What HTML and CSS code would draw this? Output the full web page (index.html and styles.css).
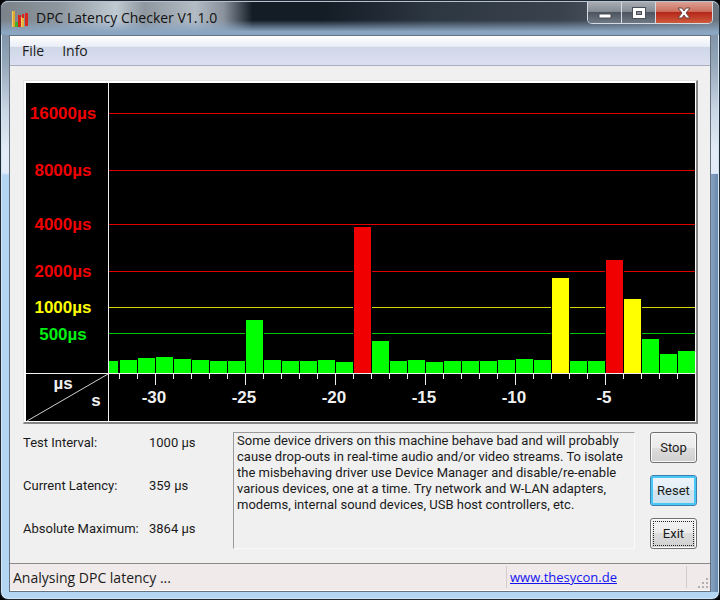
FILE: index.html
```
<!DOCTYPE html>
<html lang="en">
<head>
    <meta charset="utf-8">
    <title>DPC Latency Checker V1.1.0</title>
    <link rel="stylesheet" href="styles.css">
</head>
<body>
<div class="window">
    <div class="titlebar">
        <svg class="app-icon" width="18" height="18" viewBox="0 0 18 18">
            <path d="M1 1h3v16H1z" fill="#e0a832"/>
            <path d="M4 12h3v5H4z" fill="#3fae2a"/>
            <path d="M7 5h3v12H7z" fill="#d8261c"/>
            <path d="M10 7h3v10h-3z" fill="#e3b53a"/>
            <path d="M11 4h2v4h-2zM14 3h3v13h-3z" fill="#d8261c"/>
            <path d="M1 1h1v16H1zM10 7h1v10h-1z" fill="#f0cf60"/>
        </svg>
        <h1 class="title">DPC Latency Checker V1.1.0</h1>
        <div class="caption">
            <button class="caption-btn" aria-label="Minimize">
                <svg width="14" height="14" viewBox="0 0 14 14"><path d="M1 8h12v4H1z" fill="#fff" stroke="#4b4f58"/></svg>
            </button>
            <button class="caption-btn" aria-label="Maximize">
                <svg width="14" height="14" viewBox="0 0 14 14">
                    <path d="M0 1h14v12H0z" fill="#4b4f58"/>
                    <path d="M1 2h12v10H1zM4 5v4h6V5z" fill="#fff" fill-rule="evenodd"/>
                    <path d="M5 6h4v2H5z" fill="#8b929b"/>
                </svg>
            </button>
            <button class="caption-btn close" aria-label="Close">
                <svg width="14" height="14" viewBox="0 0 14 14"><path d="M1 2h4l2 3 2-3h4L9 7l4 5H9L7 9l-2 3H1l4-5z" fill="#fff" stroke="#6b4440"/></svg>
            </button>
        </div>
    </div>

    <div class="client">
        <div class="menubar">
            <button class="menu">File</button>
            <button class="menu">Info</button>
        </div>

        <div class="content">
            <div class="chart">
                <svg class="plot" viewBox="0 0 669 338">
                    <!-- thresholds -->
                    <g class="red">
                        <path d="M83 30h586v1H83zM83 87h586v1H83zM83 141h586v1H83zM83 188h586v1H83z"/>
                        <text x="37" y="36">16000µs</text>
                        <text x="37" y="93">8000µs</text>
                        <text x="37" y="147">4000µs</text>
                        <text x="37" y="194">2000µs</text>
                    </g>
                    <g class="yellow">
                        <path d="M83 224h586v1H83z"/>
                        <text x="37" y="230">1000µs</text>
                    </g>
                    <g class="green">
                        <path d="M83 250h586v1H83z"/>
                        <text x="37" y="257">500µs</text>
                    </g>

                    <!-- black gap behind each tall bar -->
                    <path d="M219 237h19v53h-19zM327 144h19v146h-19zM525 195h19v95h-19zM579 177h19v113h-19zM597 216h19v74h-19z"/>

                    <!-- one bar per second -->
                    <g class="bars green">
                        <path d="M83 278h9v12h-9zM94 277h17v13H94zM112 275h17v15h-17zM130 274h17v16h-17zM148 276h17v14h-17zM166 277h17v13h-17z"/>
                        <path d="M184 278h17v12h-17zM202 278h17v12h-17zM220 237h17v53h-17zM238 277h17v13h-17zM256 278h17v12h-17zM274 278h17v12h-17z"/>
                        <path d="M292 277h17v13h-17zM310 279h17v11h-17zM346 258h17v32h-17zM364 278h17v12h-17zM382 277h17v13h-17zM400 279h17v11h-17z"/>
                        <path d="M418 278h17v12h-17zM436 278h17v12h-17zM454 278h17v12h-17zM472 277h17v13h-17zM490 276h17v14h-17zM508 277h17v13h-17z"/>
                        <path d="M544 278h17v12h-17zM562 278h17v12h-17zM616 256h17v34h-17zM634 271h17v19h-17zM652 268h17v22h-17z"/>
                    </g>
                    <path class="bars yellow" d="M526 195h17v95h-17zM598 216h17v74h-17z"/>
                    <path class="bars red" d="M328 144h17v146h-17zM580 177h17v113h-17z"/>

                    <!-- axes and ticks -->
                    <g class="white">
                        <path d="M82 0h1v338h-1zM0 290h669v1H0z"/>
                        <path class="slash" d="M1 338L82 291"/>
                        <path class="minor" d="M93 293H669"/>
                        <path class="major" d="M129 296H669"/>
                        <text x="37" y="306">µs</text>
                        <text x="70" y="323">s</text>
                        <text x="128" y="320">-30</text>
                        <text x="218" y="320">-25</text>
                        <text x="308" y="320">-20</text>
                        <text x="398" y="320">-15</text>
                        <text x="488" y="320">-10</text>
                        <text x="578" y="320">-5</text>
                    </g>
                </svg>
            </div>

            <div class="info">
                <dl class="readings">
                    <dt>Test Interval:</dt><dd>1000 µs</dd>
                    <dt>Current Latency:</dt><dd>359 µs</dd>
                    <dt>Absolute Maximum:</dt><dd>3864 µs</dd>
                </dl>
                <textarea class="message" aria-label="Result" readonly>Some device drivers on this machine behave bad and will probably
cause drop-outs in real-time audio and/or video streams. To isolate
the misbehaving driver use Device Manager and disable/re-enable
various devices, one at a time. Try network and W-LAN adapters,
modems, internal sound devices, USB host controllers, etc.</textarea>
                <div class="buttons">
                    <button class="button">Stop</button>
                    <button class="button default">Reset</button>
                    <button class="button focused">Exit</button>
                </div>
            </div>
        </div>

        <div class="statusbar">
            <span class="status">Analysing DPC latency ...</span>
            <span class="site"><a href="http://www.thesycon.de">www.thesycon.de</a></span>
            <svg class="grip" width="10" height="10" viewBox="0 0 10 10">
                <path d="M8 0h2v2H8zM4 4h2v2H4zM8 4h2v2H8zM0 8h2v2H0zM4 8h2v2H4zM8 8h2v2H8z" fill="#b5b0b0"/>
            </svg>
        </div>
    </div>
</div>
</body>
</html>
```
FILE: styles.css
```
* {
    box-sizing: border-box;
}

body {
    margin: 0;
    background: #000;
    color: #1a1a1a;
    font-family: "Open Sans", "Noto Sans", sans-serif;
    font-size: 13px;
}

button, textarea {
    font: inherit;
    color: inherit;
}

.window {
    display: flex;
    flex-direction: column;
    min-height: 100vh;
    padding: 0 8px 7px;
    border: 1px solid #1d2935;
    border-radius: 8px;
    box-shadow: inset 0 0 0 1px #d5e6f2;
    background:
        linear-gradient(to right, #86a3c2, #6484a8) no-repeat right 0 bottom 7px / 8px calc(100% - 180px),
        linear-gradient(to bottom, #6d7f93 0, #93a5b8 60px, #c9d6e4 110px, #e2ecf8 150px, #e2ecf8 172px, #b4d5f3 174px, #b4d5f3 100%);
}

/* title bar */
.titlebar {
    display: flex;
    align-items: center;
    gap: 7px;
    height: 34px;
    margin: 0 -8px;
    padding-left: 10px;
    border-top: 1px solid #b9c2cc;
    border-radius: 7px 7px 0 0;
    background:
        linear-gradient(to bottom, transparent 55%, #8ba6c2 90%),
        linear-gradient(to right, #7b8289 0, #8d969f 8%, #c0cad3 16%, #8e969f 20%, #b3bcc5 27%, #8a939d 31%, #141c26 35%, #141c26 45%, #2d3741 60%, #39424d 78%, #6b7580 100%);
}

.title {
    flex: 1;
    margin: 0;
    padding-bottom: 2px;
    font-size: 14px;
    font-weight: normal;
    color: #111;
}

.caption {
    display: flex;
    align-self: flex-start;
    margin-right: 6px;
    border: 1px solid #d4dbe2;
    border-top: 0;
    border-radius: 0 0 5px 5px;
    overflow: hidden;
}

.caption-btn {
    display: flex;
    align-items: center;
    justify-content: center;
    width: 34px;
    height: 21px;
    padding: 0;
    border: 0;
    border-right: 1px solid #d4dbe2;
    background: linear-gradient(#a8adb3 0, #868c94 45%, #4d555f 50%, #6f7985 100%);
}

.caption-btn.close {
    width: 56px;
    border-right: 0;
    background: linear-gradient(#dba094 0, #cc6f5e 45%, #b5281a 50%, #cf5a3c 100%);
}

/* client area */
.client {
    flex: 1;
    display: flex;
    flex-direction: column;
    border: 1px solid #66727f;
    background: #f0f0f0;
}

.menubar {
    display: flex;
    gap: 18px;
    height: 30px;
    padding-left: 12px;
    border-bottom: 1px solid #a9afbc;
    background: linear-gradient(#fff 0, #e9edf6 36%, #cfd7e7 38%, #dcdff1 100%);
}

.menu {
    padding: 0;
    border: 0;
    background: none;
    font-size: 14px;
}

.content {
    flex: 1;
    padding: 14px 12px 14px 13px;
}

.chart {
    padding: 2px 1px 1px 2px;
    border: solid;
    border-width: 1px 2px 2px 1px;
    border-color: #e2e2e2 #858585 #858585 #e2e2e2;
    background: #fff;
}

.plot {
    display: block;
    width: 100%;
    background: #000;
    font: bold 17px "Liberation Sans", Arial, sans-serif;
    text-anchor: middle;
}

.plot path {
    shape-rendering: crispEdges;
}

.red {
    fill: #f00000;
}

.yellow {
    fill: #ffff00;
}

.green {
    fill: #00f010;
}

.red > path {
    fill: #e00000;
}

.yellow > path {
    fill: #d8d800;
}

.green > path {
    fill: #00c800;
}

.bars.green > path {
    fill: #00ff00;
}

.white {
    fill: #f0f0f0;
}

.plot .slash {
    stroke: #d0d0d0;
    shape-rendering: auto;
}

.minor {
    stroke: #f0f0f0;
    stroke-width: 6;
    stroke-dasharray: 1 17;
}

.major {
    stroke: #f0f0f0;
    stroke-width: 12;
    stroke-dasharray: 1 89;
}

/* readings, message and buttons */
.info {
    display: flex;
    align-items: flex-start;
    gap: 15px;
    margin: 8px 1px 0 0;
    font-family: Roboto, "Open Sans", sans-serif;
}

.readings {
    display: grid;
    grid-template-columns: 126px 69px;
    row-gap: 21px;
    margin: 0;
    line-height: 22px;
}

.readings dd {
    margin: 0;
}

.message {
    flex: 1;
    min-width: 0;
    height: 117px;
    padding: 0 3px;
    border: 1px solid;
    border-color: #9a9a9a #fafafa #fafafa #9a9a9a;
    background: transparent;
    line-height: 16px;
    white-space: pre;
    overflow: hidden;
    resize: none;
    outline: none;
}

.buttons {
    display: flex;
    flex-direction: column;
    gap: 12px;
}

.button {
    width: 47px;
    height: 31px;
    padding: 0;
    border: 1px solid #707070;
    border-radius: 3px;
    box-shadow: inset 0 0 0 1px #fafafa;
    background: linear-gradient(#f2f2f2 0, #ebebeb 50%, #dddddd 50%, #cfcfcf 100%);
}

.button.default {
    border-color: #3c7fb1;
    box-shadow: inset 0 0 0 2px #48c8f4;
    background: linear-gradient(#eef5fa 0, #e3eef6 50%, #d2e4f0 50%, #d0e2ee 100%);
}

.button.focused {
    outline: 1px dotted #222;
    outline-offset: -4px;
}

/* status bar */
.statusbar {
    display: flex;
    align-items: center;
    height: 28px;
    padding: 0 1px 0 3px;
    border-top: 1px solid #8a8a8a;
    border-bottom: 1px solid #fff;
    background: #f0eaea;
}

.status {
    flex: 1;
    font-size: 14px;
}

.site {
    width: 181px;
    padding: 2px 3px;
    border: solid #d2cccc;
    border-width: 0 1px;
}

.site a {
    color: #1414f0;
}

.grip {
    align-self: flex-end;
    margin: 0 1px 2px 11px;
}
```
